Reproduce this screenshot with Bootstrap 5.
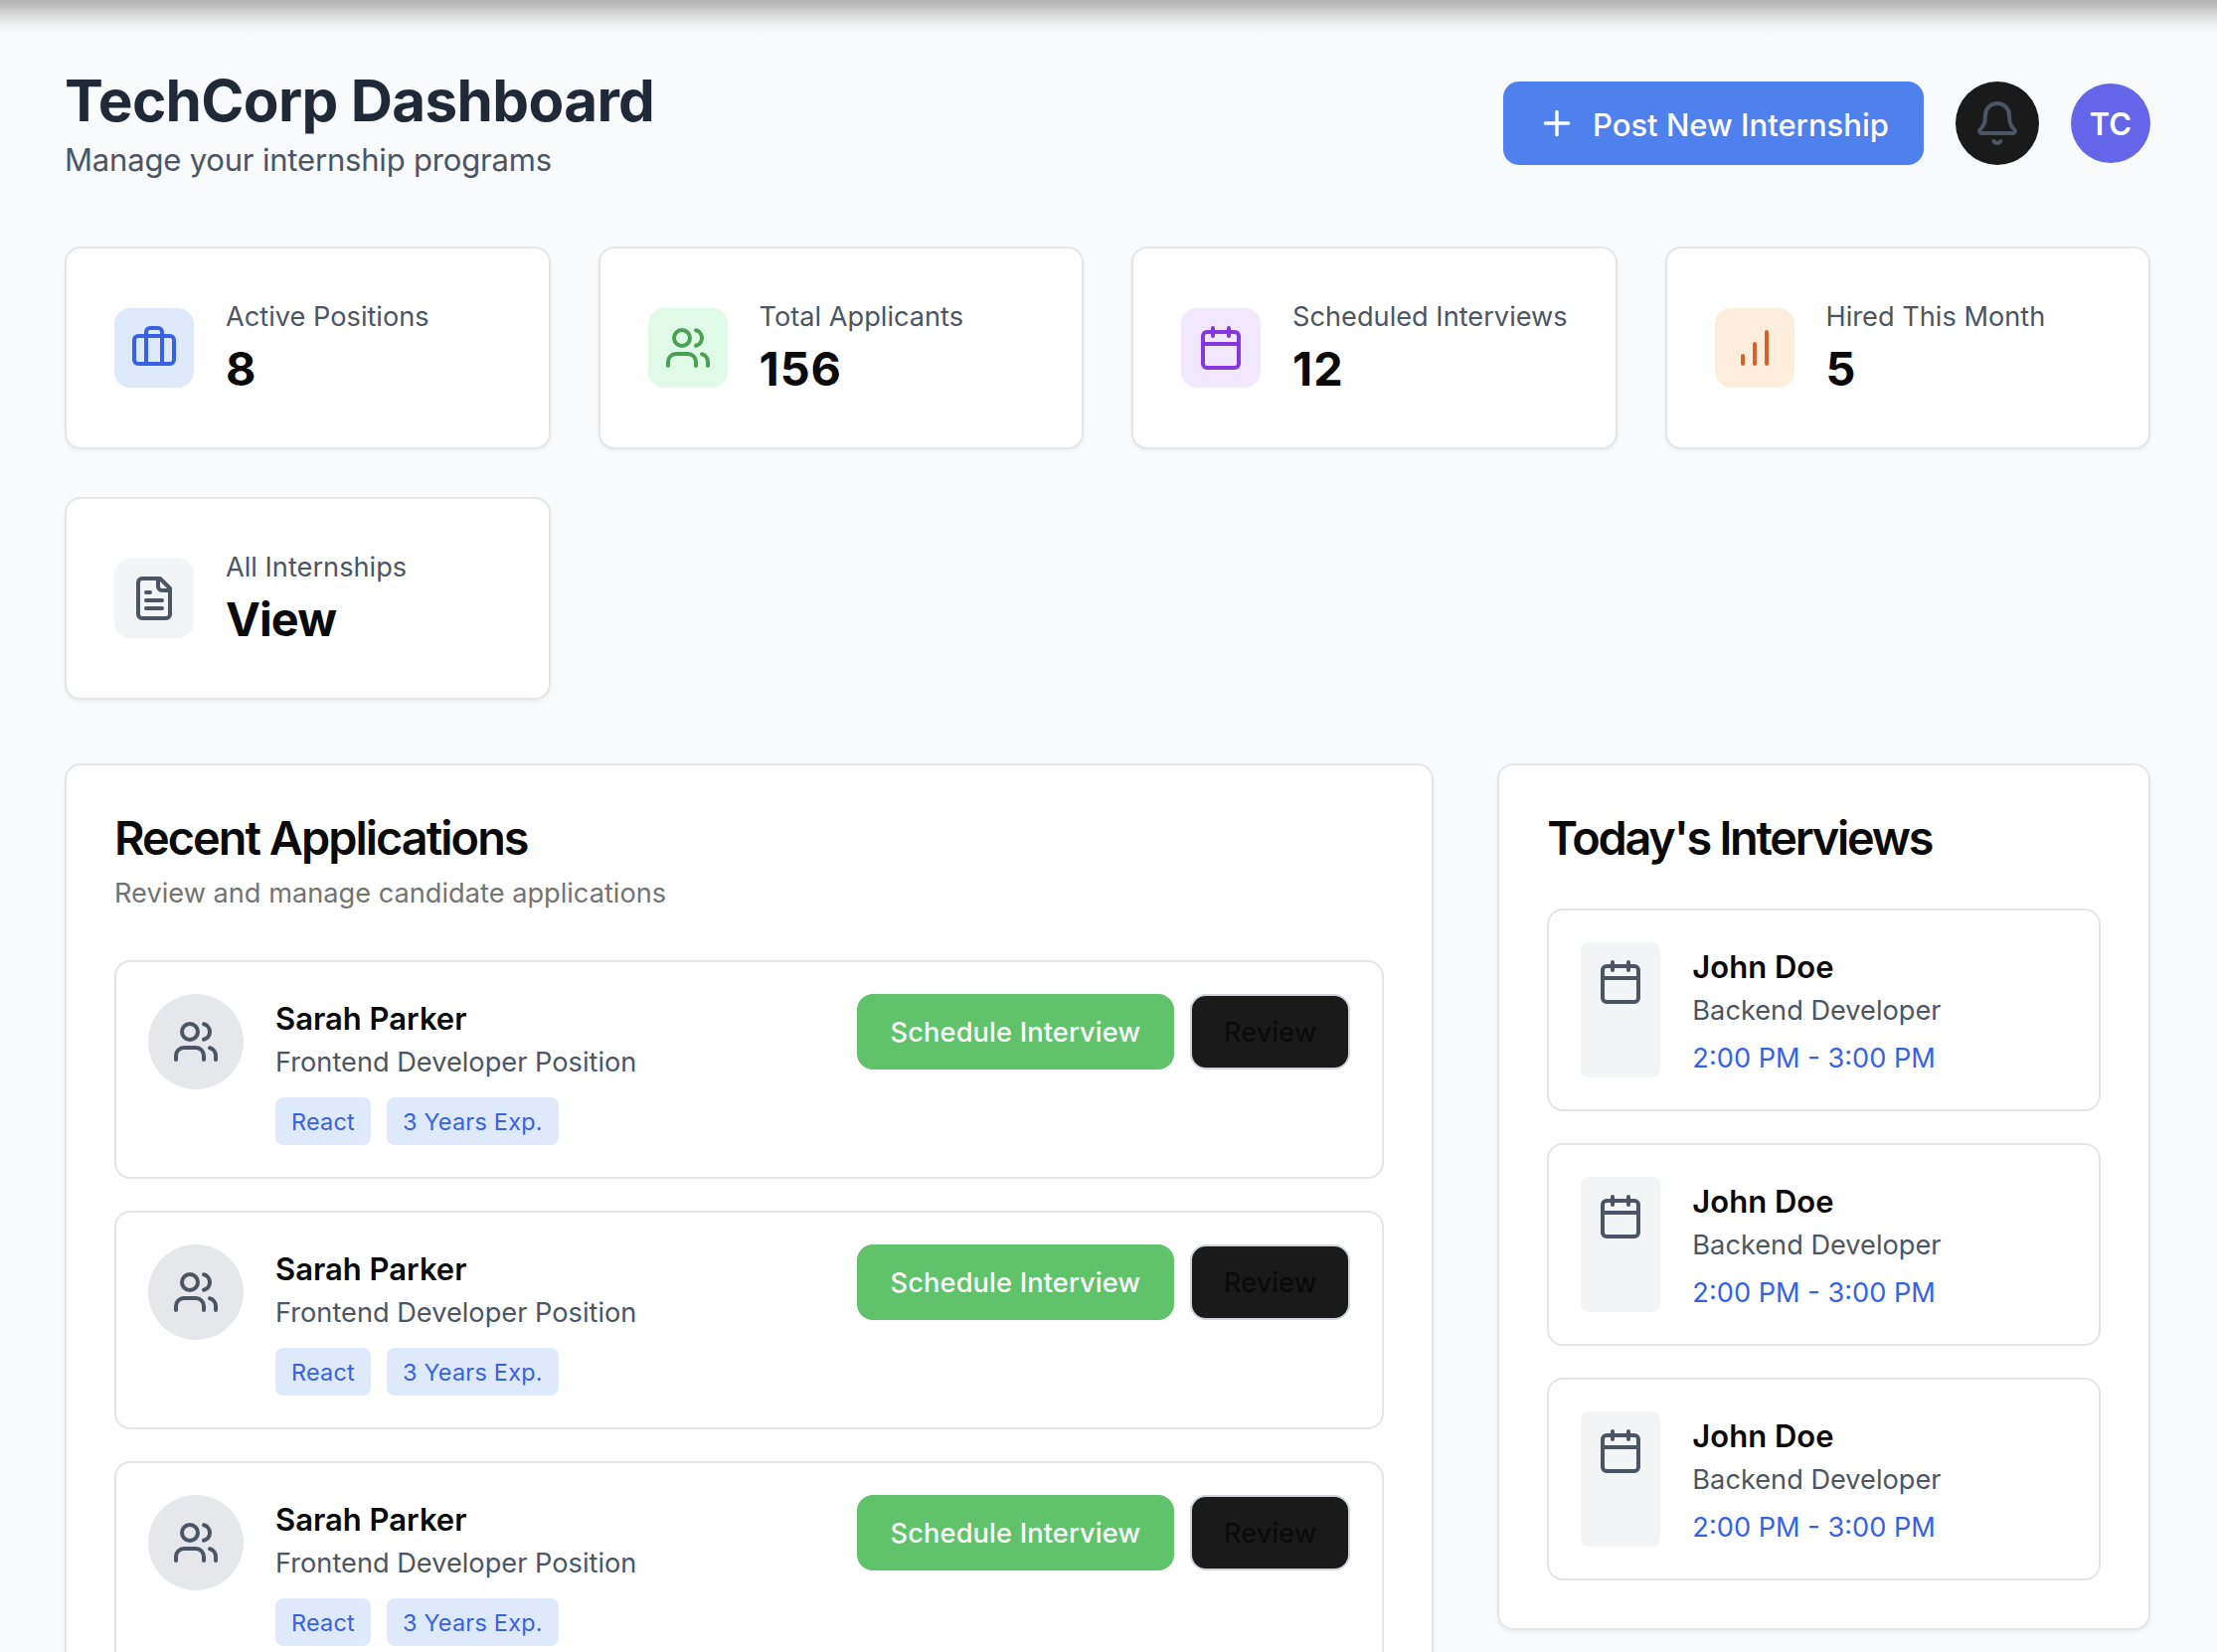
<!DOCTYPE html>
<html lang="en">
<head>
<meta charset="utf-8">
<meta name="viewport" content="width=device-width, initial-scale=1">
<title>TechCorp Dashboard</title>
<link href="https://cdn.jsdelivr.net/npm/bootstrap@5.3.0/dist/css/bootstrap.min.css" rel="stylesheet">
<style>
html{overflow:hidden}
body{font-family:Inter,"Liberation Sans",sans-serif;font-size:31px;line-height:48px;color:#0a0a0a;background:#f9fafb;height:1662px;overflow:hidden;position:relative}
.top-shade{top:0;left:0;right:0;height:36px;background:linear-gradient(#b1b1b1,#c0c0c0 18%,#d8d8d8 40%,#ecedee 64%,#f6f7f8 84%,#f9fafb)}
.page{padding:64px 67px 0 65px}
.page-head{height:120px;margin-bottom:64px}
h1{font-size:58.4px;line-height:74px;font-weight:700;color:#1f2937;margin:0 0 -2px;letter-spacing:-.66px}
.subtitle{line-height:50px;margin-bottom:-2px;letter-spacing:-.18px}
.muted{color:#4b5563}
svg{display:block;flex:none;fill:none;stroke:currentColor;stroke-width:2;stroke-linecap:round;stroke-linejoin:round;width:48px;height:48px}
svg.plus{width:40px;height:40px}
.btn{--bs-btn-padding-x:32px;--bs-btn-padding-y:16px;--bs-btn-border-width:2px;--bs-btn-border-radius:16px;--bs-btn-font-size:27.2px;--bs-btn-line-height:40px;--bs-btn-font-weight:500;white-space:nowrap}
.btn-post{--bs-btn-font-size:31px;--bs-btn-line-height:48px;--bs-btn-color:#fff;--bs-btn-bg:#4f81ee;width:423px}
.btn-post span{padding-top:2px;margin-bottom:-2px}
.btn-bell{--bs-btn-padding-x:16px;--bs-btn-bg:#1a1a1a;--bs-btn-color:#4b5563}
.btn-plan,.btn-review{padding:17px 0 15px}
.btn-plan{--bs-btn-color:#fff;--bs-btn-bg:#60c36b;width:319px;letter-spacing:.15px}
.btn-review{--bs-btn-color:#0a0a0a;--bs-btn-bg:#1a1a1a;--bs-btn-border-color:#d1d5db;width:161.5px}
.avatar{width:80px;height:80px;background:#6466e9;color:#fff;font-weight:600;padding-top:2px}
.stats{display:grid;grid-template-columns:repeat(4,minmax(0,1fr));gap:48px;margin-bottom:64px}
.panel{border:2px solid #e5e5e5;border-radius:16px;background:#fff;padding:48px;box-shadow:0 2px 4px rgba(0,0,0,.05)}
.tile{padding:16px;border-radius:16px}
.tile-blue{background:#dee9fc;color:#3662e3}
.tile-green{background:#e0fae8;color:#4ba152}
.tile-purple{background:#f1e8fd;color:#8637e0}
.tile-orange{background:#fceeda;color:#d9622b}
.tile-gray{background:#f3f4f6;color:#4b5563}
.sm-text{font-size:27.2px;line-height:42px;margin-bottom:-2px;white-space:nowrap}
.figure-num{font-size:46.8px;line-height:67px;margin-bottom:-3px;font-weight:700;letter-spacing:1px}
.figure-word{letter-spacing:-.9px}
.columns{display:grid;grid-template-columns:repeat(3,minmax(0,1fr));gap:64px;align-items:start}
.wide{grid-column:span 2}
h2{font-size:46.8px;line-height:51px;font-weight:600;margin:0 0 -3px}
.title-apps{letter-spacing:-1.95px}
.title-slots{letter-spacing:-2.25px}
.desc{color:#737373;margin-top:12px}
.entries{margin-top:48px;gap:32px}
.entry{border:2px solid #e5e5e5;border-radius:16px;padding:32px}
.face{width:96px;height:96px;background:#e5e7eb;color:#4b5563}
.person{font-weight:600;line-height:50px;margin-bottom:-2px}
.tags{margin-top:16px;gap:16px}
.tag{background:#dee9fc;color:#3662e3;font-size:23.4px;line-height:32px;padding:9px 16px 7px;border-radius:8px;white-space:nowrap;letter-spacing:.25px}
.slot{border-radius:8px}
.hour{color:#3662e3;margin-top:8px}
.g32{gap:32px}
.g16{gap:16px}
</style>
</head>
<body>
<svg class="d-none">
<symbol id="users" viewBox="0 0 24 24"><path d="M16 21v-2a4 4 0 0 0-4-4H6a4 4 0 0 0-4 4v2"/><circle cx="9" cy="7" r="4"/><path d="M22 21v-2a4 4 0 0 0-3-3.87M16 3.13a4 4 0 0 1 0 7.75"/></symbol>
<symbol id="calendar" viewBox="0 0 24 24"><path d="M8 2v4M16 2v4M3 10h18"/><rect width="18" height="18" x="3" y="4" rx="2"/></symbol>
</svg>
<div class="top-shade position-absolute"></div>
<main class="page">
<header class="page-head d-flex justify-content-between align-items-center">
  <div><h1>TechCorp Dashboard</h1><div class="subtitle muted">Manage your internship programs</div></div>
  <div class="d-flex align-items-center g32">
    <button class="btn btn-post d-flex align-items-center g16"><svg class="plus" viewBox="0 0 24 24"><path d="M5 12h14M12 5v14"/></svg><span>Post New Internship</span></button>
    <button class="btn btn-bell rounded-circle"><svg viewBox="0 0 24 24"><path d="M10.268 21a2 2 0 0 0 3.464 0"/><path d="M3.262 15.326A1 1 0 0 0 4 17h16a1 1 0 0 0 .74-1.673C19.41 13.956 18 12.499 18 8A6 6 0 0 0 6 8c0 4.499-1.411 5.956-2.738 7.326"/></svg></button>
    <div class="avatar rounded-circle d-flex align-items-center justify-content-center">TC</div>
  </div>
</header>
<section class="stats">
  <div class="panel d-flex align-items-center g32"><div class="tile tile-blue"><svg viewBox="0 0 24 24"><path d="M16 20V4a2 2 0 0 0-2-2h-4a2 2 0 0 0-2 2v16"/><rect width="20" height="14" x="2" y="6" rx="2"/></svg></div><div><div class="sm-text muted">Active Positions</div><div class="figure-num">8</div></div></div>
  <div class="panel d-flex align-items-center g32"><div class="tile tile-green"><svg><use href="#users"/></svg></div><div><div class="sm-text muted">Total Applicants</div><div class="figure-num">156</div></div></div>
  <div class="panel d-flex align-items-center g32"><div class="tile tile-purple"><svg><use href="#calendar"/></svg></div><div><div class="sm-text muted">Scheduled Interviews</div><div class="figure-num">12</div></div></div>
  <div class="panel d-flex align-items-center g32"><div class="tile tile-orange"><svg viewBox="0 0 24 24"><path d="M6 20v-4M12 20V10M18 20V4"/></svg></div><div><div class="sm-text muted">Hired This Month</div><div class="figure-num">5</div></div></div>
  <div class="panel d-flex align-items-center g32"><div class="tile tile-gray"><svg viewBox="0 0 24 24"><path d="M15 2H6a2 2 0 0 0-2 2v16a2 2 0 0 0 2 2h12a2 2 0 0 0 2-2V7Z"/><path d="M14 2v4a2 2 0 0 0 2 2h4M10 9H8M16 13H8M16 17H8"/></svg></div><div><div class="sm-text muted">All Internships</div><div class="figure-num figure-word">View</div></div></div>
</section>
<section class="columns">
  <div class="panel wide">
    <h2 class="title-apps">Recent Applications</h2>
    <div class="desc sm-text">Review and manage candidate applications</div>
    <div class="entries d-flex flex-column" id="applications"></div>
  </div>
  <div class="panel">
    <h2 class="title-slots">Today's Interviews</h2>
    <div class="entries d-flex flex-column" id="interviews"></div>
  </div>
</section>
</main>
<script src="https://cdn.jsdelivr.net/npm/bootstrap@5.3.0/dist/js/bootstrap.bundle.min.js"></script>
<script>
const application = `<div class="entry d-flex justify-content-between align-items-start">
  <div class="d-flex g32"><div class="face rounded-circle d-flex align-items-center justify-content-center"><svg><use href="#users"/></svg></div>
  <div><div class="person">Sarah Parker</div><div class="sm-text muted">Frontend Developer Position</div>
  <div class="tags d-flex"><span class="tag">React</span><span class="tag">3 Years Exp.</span></div></div></div>
  <div class="d-flex g16"><button class="btn btn-plan">Schedule Interview</button><button class="btn btn-review">Review</button></div></div>`;
const interview = `<div class="entry d-flex g32"><div class="tile tile-gray slot"><svg><use href="#calendar"/></svg></div>
  <div><div class="person">John Doe</div><div class="sm-text muted">Backend Developer</div><div class="sm-text hour">2:00 PM - 3:00 PM</div></div></div>`;
document.getElementById('applications').innerHTML = application.repeat(3);
document.getElementById('interviews').innerHTML = interview.repeat(3);
</script>
</body>
</html>
